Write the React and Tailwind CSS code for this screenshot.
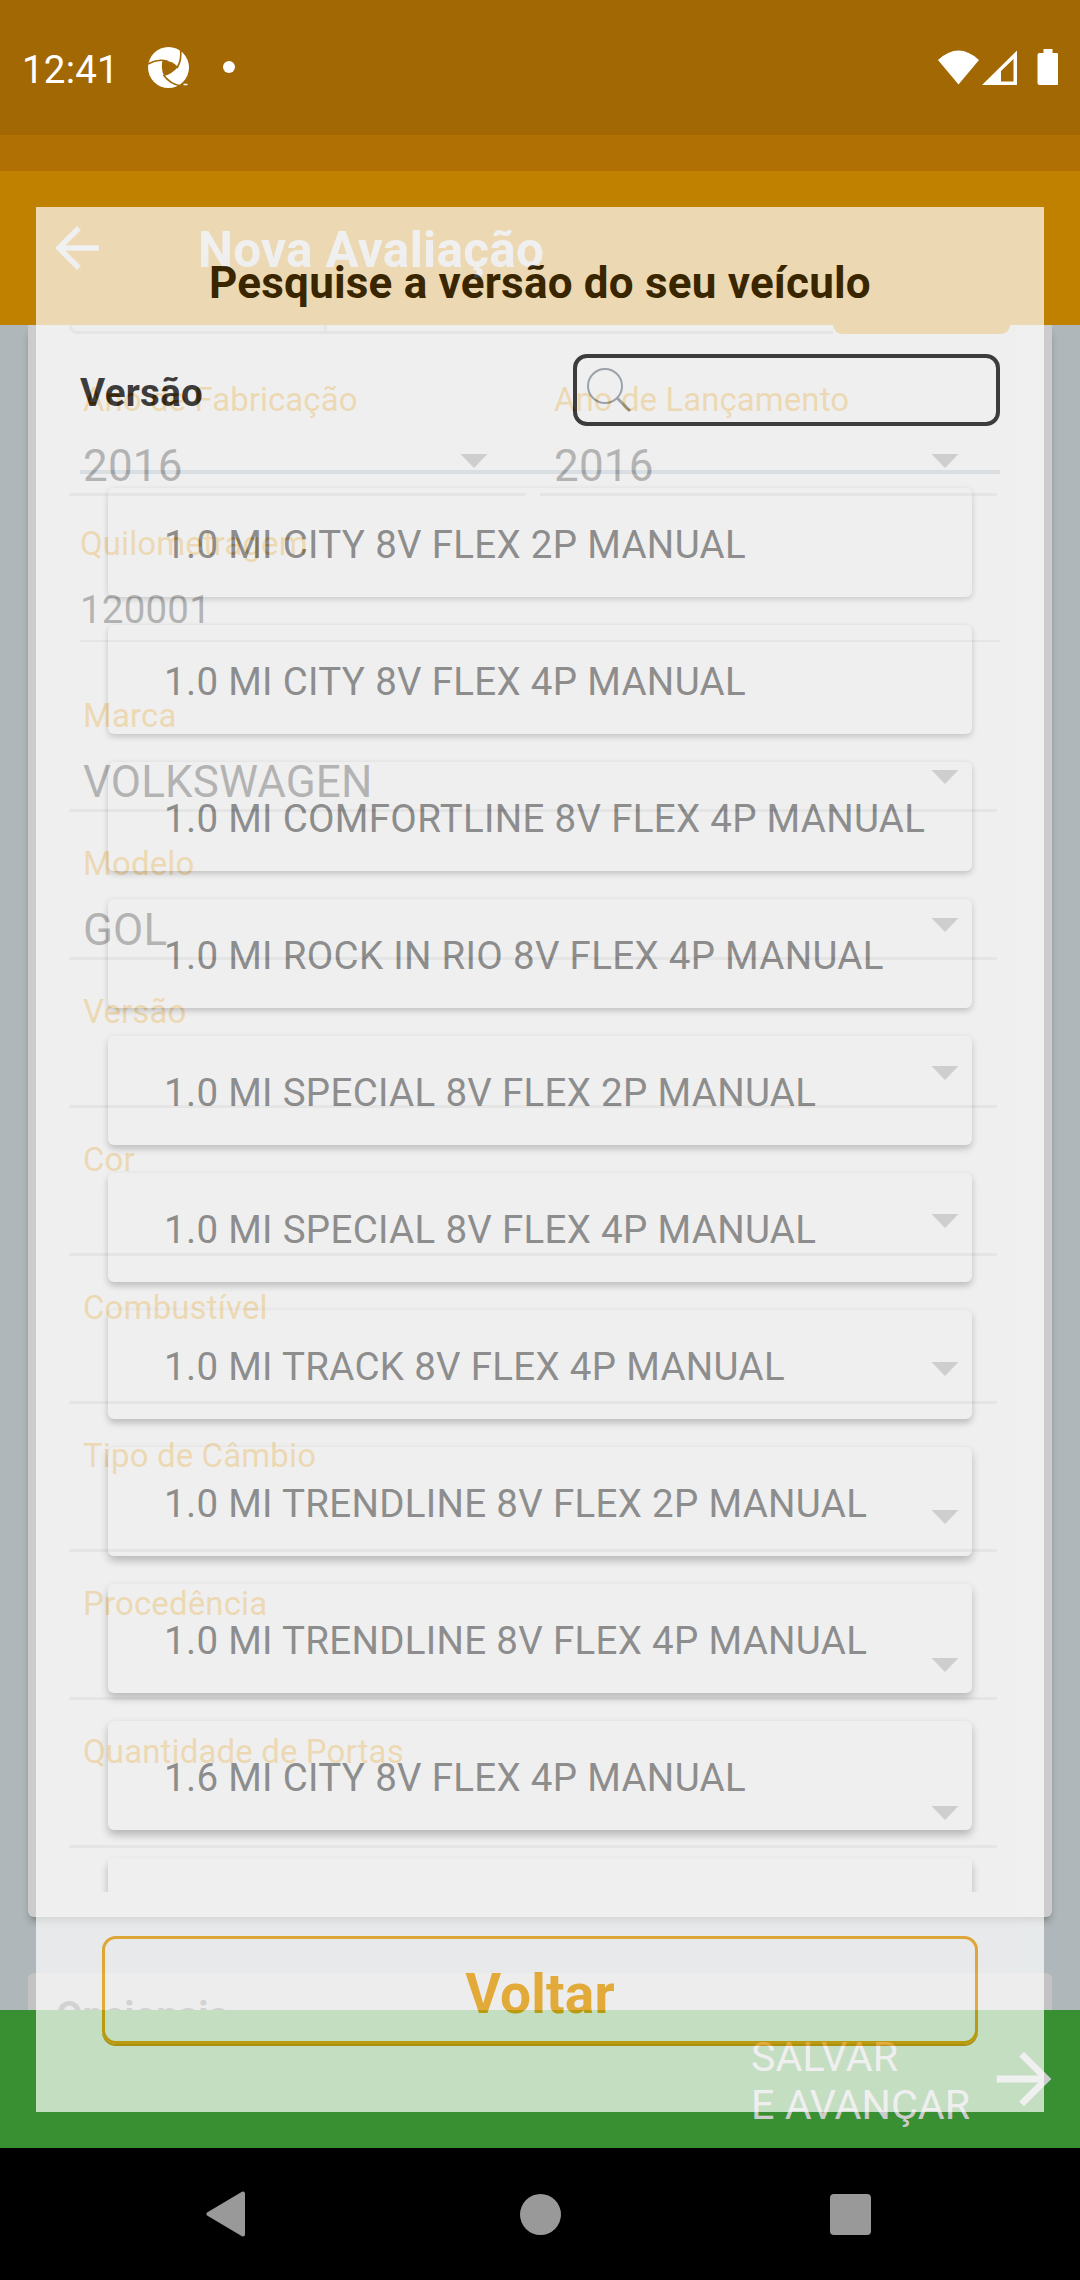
const FIELDS = ["Marca", "Modelo", "Versão", "Cor", "Combustível", "Tipo de Câmbio", "Procedência", "Quantidade de Portas"];
const VALUES = { Marca: "VOLKSWAGEN", Modelo: "GOL" };

const VERSIONS = [
  "1.0 MI CITY 8V FLEX 2P MANUAL",
  "1.0 MI CITY 8V FLEX 4P MANUAL",
  "1.0 MI COMFORTLINE 8V FLEX 4P MANUAL",
  "1.0 MI ROCK IN RIO 8V FLEX 4P MANUAL",
  "1.0 MI SPECIAL 8V FLEX 2P MANUAL",
  "1.0 MI SPECIAL 8V FLEX 4P MANUAL",
  "1.0 MI TRACK 8V FLEX 4P MANUAL",
  "1.0 MI TRENDLINE 8V FLEX 2P MANUAL",
  "1.0 MI TRENDLINE 8V FLEX 4P MANUAL",
  "1.6 MI CITY 8V FLEX 4P MANUAL",
  "",
];

function Caret() {
  return (
    <svg className="h-[14px] w-[28px] shrink-0" viewBox="0 0 28 14">
      <path d="M0.5 0H27.5L14 14z" fill="#737373" />
    </svg>
  );
}

function Field({ label, value }) {
  return (
    <div className="flex h-[148px] flex-col border-b-[3px] border-[#d3d3d3] pl-[14px] pr-[38px]">
      <div className="mt-[32px] h-[39px] text-[33px] leading-[39px] tracking-[0.13px] text-[#f0a000]">{label}</div>
      <div className="mt-[24px] flex h-[50px] items-start justify-between">
        <span className="-mt-[3px] text-[44px] leading-[52px] tracking-[0.1px]">{value}</span>
        <span className="ml-auto mt-[11px]">
          <Caret />
        </span>
      </div>
    </div>
  );
}

function YearField({ label }) {
  return (
    <div className="flex h-[116px] flex-1 flex-col border-b-[3px] border-[#d3d3d3] pl-[14px] pr-[38px]">
      <div className="h-[39px] text-[33px] leading-[39px] tracking-[0.05px] text-[#f0a000]">{label}</div>
      <div className="mt-[26px] flex h-[48px] items-start justify-between">
        <span className="-mt-[5px] text-[44px] leading-[52px] tracking-[0.2px]">2016</span>
        <span className="mt-[9px]">
          <Caret />
        </span>
      </div>
    </div>
  );
}

function StatusBar() {
  return (
    <div className="absolute inset-x-0 top-0 flex h-[135px] items-start text-white">
      <span className="ml-[22px] mt-[47px] w-[126px] text-[38.5px] leading-[46px] tracking-[0.2px]">12:41</span>
      <svg className="mt-[47px] h-[42px] w-[42px]" viewBox="0 0 42 42">
        <circle cx="20.500" cy="20.500" r="20.500" fill="#fff" />
        <path d="M14.500 13.500Q24 13 30 20Q24 27 16 29Q12.500 21 14.500 13.500z" fill="#a26804" />
        <g fill="none" stroke="#a26804" strokeWidth="1.600">
          <path d="M0 17Q10 11 20 14.500" />
          <path d="M32.500 2Q34 13 29 21" />
          <path d="M15.500 28Q22 37 33 39" />
        </g>
        <path d="M35.500 37.500h4" stroke="#fff" strokeWidth="1.500" />
      </svg>
      <span className="ml-[33px] mt-[61px] h-[12px] w-[12px] rounded-full bg-white" />
      <svg className="ml-auto mr-[22px] mt-[48px] h-[38px] w-[120px]" viewBox="0 0 120 38" fill="#fff">
        <path d="M0 12Q20.500 -7 41 12L20.500 36.500z" />
        <path fillRule="evenodd" d="M44 37L79 2.500V37zM63 23V33.500H75.500V11z" />
        <path d="M105.500 1h9v4h4q2 0 2 2V35q0 2-2 2h-17q-2 0-2-2V7q0-2 2-2h4z" />
      </svg>
    </div>
  );
}

function AppPage() {
  return (
    <div className="flex h-[2148px] flex-col overflow-hidden bg-[#dce5e9]">
      <div className="h-[135px] bg-[#cb8205]" />
      <div className="h-[36px] bg-[#dc8c05]" />
      <header className="flex h-[154px] items-start bg-[#f0a000] pl-[44px] text-white">
        <svg className="mt-[44px] h-[66px] w-[66px]" viewBox="0 0 24 24" fill="#fff">
          <path d="M20 11H7.830l5.590-5.590L12 4l-8 8 8 8 1.410-1.410L7.830 13H20v-2z" />
        </svg>
        <h1 className="ml-[88px] mt-[50px] text-[49.5px] font-bold leading-[58px] tracking-[0.3px]">Nova Avaliação</h1>
      </header>

      <main className="h-[1685px] overflow-hidden px-[28px]">
        <section className="h-[1592px] rounded-b-[6px] bg-white pl-[41px] pr-[55px] shadow-[0_6px_8px_-3px_rgba(0,0,0,0.4)]">
          <div className="flex h-[9px] w-[941px] overflow-hidden">
            <div className="w-[258px] rounded-bl-[8px] border-b-[3px] border-l-[3px] border-r-[3px] border-[#d3d3d3] bg-[#f2f8f5]" />
            <div className="flex-1 border-b-[3px] border-[#d3d3d3]" />
            <div className="w-[177px] rounded-b-[9px] bg-[#f0a000]" />
          </div>
          <div className="mt-[46px] flex gap-[14px]">
            <YearField label="Ano de Fabricação" />
            <YearField label="Ano de Lançamento" />
          </div>
          <div className="ml-[11px] flex h-[146px] w-[920px] flex-col border-b-2 border-[#d3d3d3]">
            <div className="mt-[28px] text-[33px] leading-[39px] tracking-[0.1px] text-[#f0a000]">Quilometragem</div>
            <div className="mt-[24px] text-[38.5px] leading-[46px] tracking-[0.2px]">120001</div>
          </div>
          <div className="mt-[22px]">
            {FIELDS.map((f) => (
              <Field key={f} label={f} value={VALUES[f]} />
            ))}
          </div>
        </section>
        <section className="mt-[56px] h-[120px] rounded-t-[6px] bg-[#f4f4f4] px-[28px] pt-[20px]">
          <h2 className="text-[38.5px] font-bold leading-[46px] text-[#838383]">Opcionais</h2>
        </section>
      </main>

      <footer className="flex h-[138px] items-start justify-end bg-[#48b440] text-white">
        <div className="mt-[23px] w-[232px] text-[41.25px] leading-[48.3px]">
          SALVAR
          <br />E AVANÇAR
        </div>
        <svg className="mr-[15px] mt-[28px] h-[82px] w-[82px]" viewBox="0 0 24 24" fill="#fff">
          <path d="M12 4l-1.410 1.410L16.170 11H4v2h12.170l-5.580 5.590L12 20l8-8z" />
        </svg>
      </footer>
    </div>
  );
}

function VersionDialog() {
  return (
    <div className="absolute left-[36px] top-[207px] flex h-[1905px] w-[1008px] flex-col bg-white opacity-70">
      <h2 className="mt-[50px] text-center text-[44px] font-bold leading-[52px] tracking-[0.2px]">
        Pesquise a versão do seu veículo
      </h2>
      <div className="mx-[44px] mt-[45px] flex h-[72px] justify-between">
        <span className="mt-[16px] text-[38.5px] font-bold leading-[46px] tracking-[0.3px]">Versão</span>
        <div className="w-[427px] rounded-[14px] border-[4px] border-black">
          <svg className="ml-[9px] mt-[9px] h-[48px] w-[48px]" viewBox="0 0 48 48" fill="none" stroke="#87919a">
            <circle cx="19" cy="19" r="17" strokeWidth="2" />
            <path d="M31.300 31.300L44 44" strokeWidth="3" />
          </svg>
        </div>
      </div>
      <div className="mx-[44px] mt-[44px] h-[4px] bg-[#dfe7ed]" />
      <ul className="mx-[44px] flex h-[1418px] flex-col gap-[28px] overflow-hidden px-[28px] pt-[14px]">
        {VERSIONS.map((v, i) => (
          <li
            key={i}
            className="flex h-[109px] shrink-0 items-start rounded-[6px] bg-white pl-[56px] text-[38.5px] tracking-[0.3px] text-[#737373]"
            style={{ boxShadow: `0 ${2 + i * 0.3}px ${6 + i * 0.3}px rgba(0,0,0,${0.23 + i * 0.01})` }}
          >
            <span className="mt-[34px] leading-[46px]">{v}</span>
          </li>
        ))}
      </ul>
      <button className="mx-[66px] mt-[44px] h-[108px] shrink-0 rounded-[14px] border-[3px] border-[#f0a000] pt-[7px] text-[55px] font-bold leading-[64px] tracking-[0.2px] text-[#f0a000] shadow-[0_2px_0_#dc9000]">
        Voltar
      </button>
    </div>
  );
}

function NavBar() {
  return (
    <nav className="flex h-[132px] items-center bg-black pl-[206px]">
      <svg className="h-[46px] w-[40px]" viewBox="0 0 40 46">
        <path d="M37 2.500V43.500L2.500 23z" fill="#999" stroke="#999" strokeWidth="4" strokeLinejoin="round" />
      </svg>
      <span className="ml-[274px] h-[41px] w-[41px] rounded-full bg-[#999]" />
      <span className="ml-[269px] h-[41px] w-[41px] rounded-[4px] bg-[#999]" />
    </nav>
  );
}

export default function App() {
  return (
    <div className="relative h-[2280px] w-[1080px] overflow-hidden font-['Roboto',sans-serif] text-black">
      <AppPage />
      <NavBar />
      <div className="absolute inset-x-0 top-0 h-[2148px] bg-black/20" />
      <VersionDialog />
      <StatusBar />
    </div>
  );
}
